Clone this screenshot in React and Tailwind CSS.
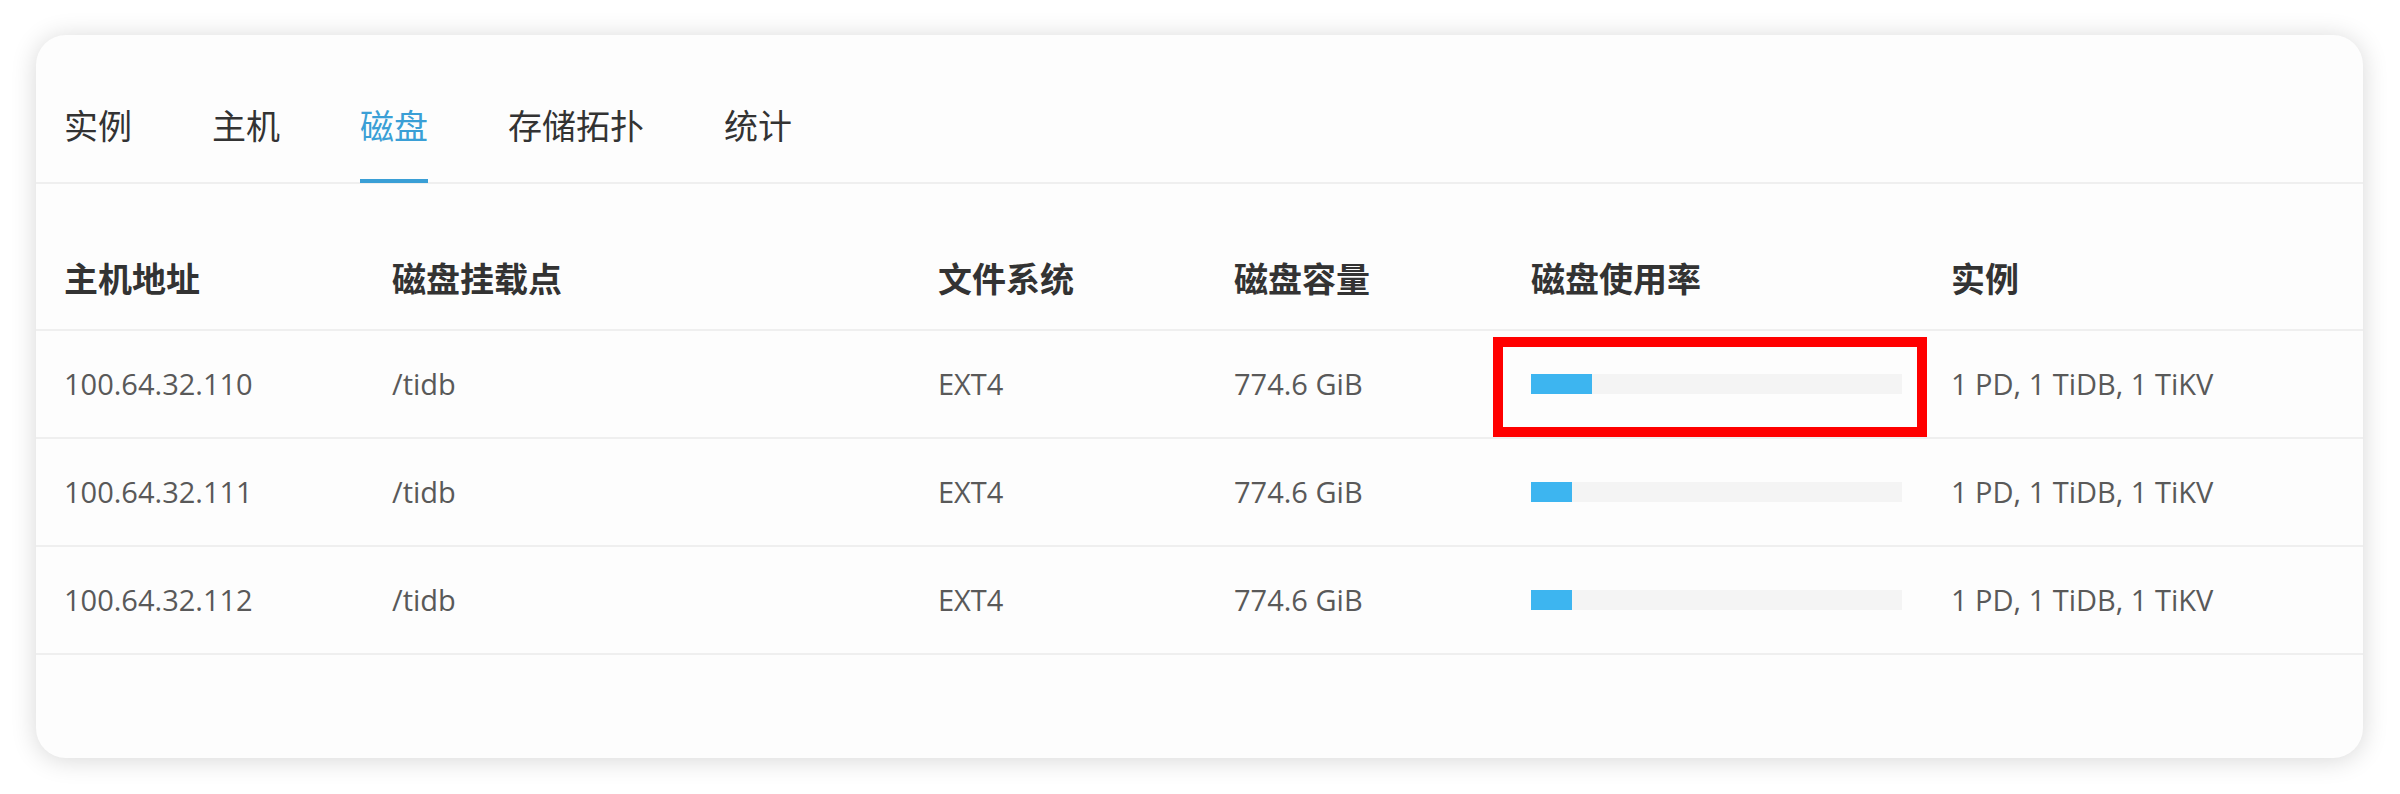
import { useState } from 'react'

const tabs = ['实例', '主机', '磁盘', '存储拓扑', '统计']

const columns = ['主机地址', '磁盘挂载点', '文件系统', '磁盘容量', '磁盘使用率', '实例']

const rows = [
  { host: '100.64.32.110', mount: '/tidb', fs: 'EXT4', size: '774.6 GiB', usage: 16.5, instances: '1 PD, 1 TiDB, 1 TiKV', marked: true },
  { host: '100.64.32.111', mount: '/tidb', fs: 'EXT4', size: '774.6 GiB', usage: 11, instances: '1 PD, 1 TiDB, 1 TiKV' },
  { host: '100.64.32.112', mount: '/tidb', fs: 'EXT4', size: '774.6 GiB', usage: 11, instances: '1 PD, 1 TiDB, 1 TiKV' },
]

const grid = 'grid grid-cols-[328px_546px_296px_297px_420px_1fr] pl-[28px]'

function UsageBar({ value }) {
  return (
    <div className="w-[371px] h-[20px] bg-[#f4f4f4]">
      <div className="h-full bg-[#3db5f0]" style={{ width: `${value}%` }} />
    </div>
  )
}

export default function App() {
  const [active, setActive] = useState(2)

  return (
    <div
      className="w-[2400px] h-[794px] bg-white pt-[35px] pl-[36px] pr-[37px]"
      style={{ fontFamily: '"Open Sans", "Noto Sans CJK SC", sans-serif' }}
    >
      <div className="h-[723px] rounded-[30px] bg-[#fdfdfd] shadow-[0_2px_26px_rgba(0,0,0,0.16)] overflow-hidden">
        <div className="h-[149px] border-b-2 border-[#efefef] flex gap-[80px] pl-[28px]">
          {tabs.map((t, i) => (
            <div
              key={t}
              onClick={() => setActive(i)}
              className={`relative h-full pt-[71px] text-[34px] leading-[40px] cursor-pointer ${
                i === active ? 'text-[#3a9fd6]' : 'text-[#333333]'
              }`}
            >
              {t}
              {i === active && (
                <span className="absolute left-0 right-0 bottom-[-1px] h-[4px] bg-[#3a9fd6]" />
              )}
            </div>
          ))}
        </div>

        <div className="mt-[47px]">
          <div className={`${grid} h-[100px] border-b-2 border-[#efefef] items-center`}>
            {columns.map((c) => (
              <div key={c} className="text-[34px] font-bold text-[#333333] leading-[40px] pb-[2px]">
                {c}
              </div>
            ))}
          </div>

          {rows.map((r) => (
            <div
              key={r.host}
              className={`${grid} h-[108px] border-b-2 border-[#efefef] text-[29px] text-[#595959]`}
            >
              <div className="flex items-center">{r.host}</div>
              <div className="flex items-center">{r.mount}</div>
              <div className="flex items-center">{r.fs}</div>
              <div className="flex items-center">{r.size}</div>
              <div className="relative flex items-center">
                <UsageBar value={r.usage} />
                {r.marked && (
                  <div className="absolute left-[-38px] top-[6px] w-[434px] h-[100px] border-[10px] border-[#ff0000]" />
                )}
              </div>
              <div className="flex items-center">{r.instances}</div>
            </div>
          ))}
        </div>
      </div>
    </div>
  )
}
